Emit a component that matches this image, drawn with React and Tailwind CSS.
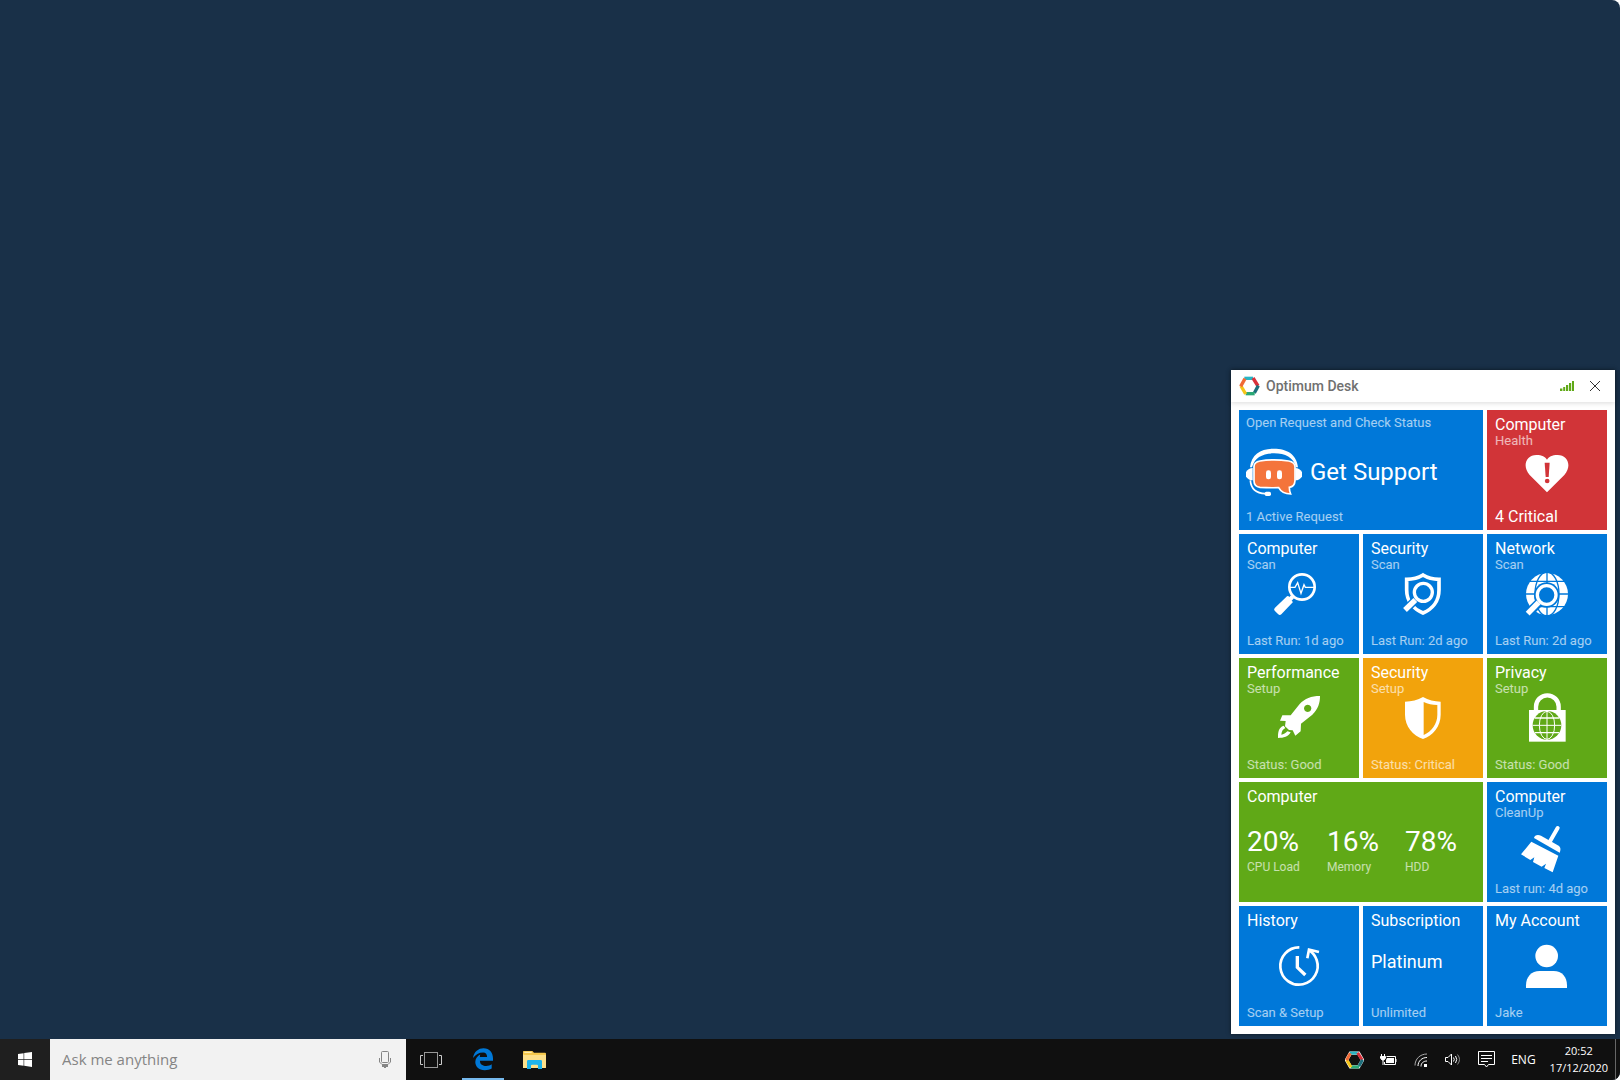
import React from 'react';

const TILE_COLORS = {
  blue: 'bg-[#0078d9]',
  red: 'bg-[#d13438]',
  green: 'bg-[#60a917]',
  orange: 'bg-[#f2a30c]',
};

const Icon = ({ children }) => (
  <svg viewBox="0 0 144 144" className="w-12 h-12 overflow-visible" fill="#fff" aria-hidden="true">
    {children}
  </svg>
);

const HeartIcon = () => (
  <Icon>
    <path d="M72 139 L20 87 C-4 60 10 27 40 27 C57 27 67 33 72 41 C77 33 87 27 104 27 C134 27 148 60 124 87 Z" />
    <path d="M65 50 H80 L77 93 H68 Z" fill="#d13438" />
    <circle cx="72.5" cy="105" r="7" fill="#d13438" />
  </Icon>
);

const PulseScanIcon = () => (
  <Icon>
    <circle cx="81" cy="51" r="38" fill="none" stroke="#fff" strokeWidth="8" />
    <path d="M44 52 H60 L68 38 L78 70 L87 44 L91 52 H119" fill="none" stroke="#fff" strokeWidth="4" />
    <path d="M48 76 L57 85 L50 92 L54 96 L19 133 Q14 137 9 132 L-1 122 Q-5 117 0 113 L36 79 Q40 77 43 81 Z" />
  </Icon>
);

const ShieldScanIcon = () => (
  <Icon>
    <path
      d="M72 15 C56 25 40 28 23 28 V60 C23 95 45 118 72 129 C99 118 120 95 120 60 V28 C104 28 88 25 72 15 Z"
      fill="none"
      stroke="#fff"
      strokeWidth="11"
    />
    <path d="M50 89 L14 125" stroke="#0078d9" strokeWidth="25" />
    <circle cx="73" cy="67" r="35" fill="#0078d9" />
    <circle cx="73" cy="67" r="27" fill="none" stroke="#fff" strokeWidth="10" />
    <path d="M49 90 L18 120" stroke="#fff" strokeWidth="16" />
  </Icon>
);

const GlobeScanIcon = () => (
  <Icon>
    <circle cx="72" cy="72" r="63" />
    <g fill="none" stroke="#0078d9" strokeWidth="4">
      <path d="M72 5 V139 M5 72 H139 M12 34 H132 M12 110 H132" />
      <ellipse cx="72" cy="72" rx="36" ry="66" />
    </g>
    <path d="M48 98 L8 138" stroke="#0078d9" strokeWidth="27" />
    <circle cx="71" cy="75" r="38" fill="#0078d9" />
    <circle cx="71" cy="75" r="28" fill="none" stroke="#fff" strokeWidth="10" />
    <path d="M47 97 L14 131" stroke="#fff" strokeWidth="16" />
  </Icon>
);

const RocketIcon = () => (
  <Icon>
    <path
      fillRule="evenodd"
      d="M135 6 C108 6 90 14 74 30 L47 64 L22 64 L15 80 L32 81 L30 97 L42 108 L53 109 L61 125 L77 112 L78 89 L112 62 C130 45 135 26 135 6 Z M98 32 a11 11 0 1 0 0.1 0 Z"
    />
    <path d="M26 95 C10 101 9 115 9 132 C26 132 40 128 47 115 L37 112 C32 118 26 121 19 122 C20 112 23 106 31 102 Z" />
  </Icon>
);

const ShieldIcon = () => (
  <Icon>
    <path
      fillRule="evenodd"
      d="M72 9 C56 19 38 22 18 23 V62 C18 98 42 124 72 135 C102 124 125 98 125 62 V23 C106 22 88 19 72 9 Z M74 24 C86 30 100 33 115 33 V62 C115 90 98 112 74 123 Z"
    />
  </Icon>
);

const LockGlobeIcon = () => (
  <Icon>
    <path d="M39 50 V38 a34 34 0 0 1 68 0 V50" fill="none" stroke="#fff" strokeWidth="13" />
    <rect x="18" y="48" width="110" height="95" />
    <circle cx="72" cy="94" r="43" fill="#60a917" />
    <g fill="none" stroke="#fff" strokeWidth="3">
      <path d="M72 51 V137 M29 94 H115" />
      <path d="M36 72 H108 M36 116 H108" strokeWidth="4" />
      <ellipse cx="72" cy="94" rx="23" ry="42" />
    </g>
  </Icon>
);

const BroomIcon = () => (
  <Icon>
    <path d="M104 30 L82 68" stroke="#fff" strokeWidth="12" strokeLinecap="round" />
    <path d="M33 60 C34 50 46 49 54 53 L107 83 C114 88 113 96 110 104 Z" />
    <path d="M25 71 L106 113 L89 163 L64 150 L69 137 L56 146 L30 132 L34 118 L22 126 L-6 109 Z" />
  </Icon>
);

const HistoryIcon = () => (
  <Icon>
    <g fill="none" stroke="#fff" strokeWidth="8">
      <path d="M73 16 A56 56 0 1 0 125 54 C121 42 114 32 103 25" />
      <path d="M97 49 L102 23 L132 30" />
      <path d="M67 42 V76 L91 99" strokeWidth="10" />
    </g>
  </Icon>
);

const UserIcon = () => (
  <Icon>
    <circle cx="71" cy="42" r="34" />
    <path d="M9 138 V130 C9 105 25 87 50 87 H92 C117 87 132 105 132 130 V138 Z" />
  </Icon>
);

const SupportBot = () => (
  <svg viewBox="0 0 168 144" className="w-14 h-12 overflow-visible" aria-hidden="true">
    <path d="M12 58 C16 18 46 2 84 2 C122 2 152 18 156 58 L150 58 C142 28 118 16 84 16 C50 16 26 28 18 58 Z" fill="#fff" />
    <path d="M20 60 Q8 60 0 72 V86 Q8 97 20 97 Z" fill="#fff" />
    <path d="M148 60 Q160 60 168 72 V86 Q160 97 148 97 Z" fill="#fff" />
    <path
      d="M42 39 C66 35 102 35 128 39 Q146 42 147 56 V98 Q146 116 130 118 C130 126 131 131 134 138 C116 138 104 130 98 119 C76 120 58 119 42 118 Q24 115 24 98 V56 Q24 42 42 39 Z"
      fill="#f4743b"
      stroke="#fff"
      strokeWidth="5"
    />
    <path d="M13 97 C15 122 32 136 58 137" fill="none" stroke="#fff" strokeWidth="5" />
    <rect x="56" y="131" width="19" height="13" rx="5" fill="#fff" />
    <rect x="60" y="67" width="15" height="27" rx="7" fill="#fff" />
    <rect x="93" y="67" width="15" height="27" rx="7" fill="#fff" />
  </svg>
);

const HexLogo = ({ className }) => (
  <svg viewBox="0 0 63 58" className={className} fill="none" strokeWidth="10" aria-hidden="true">
    <path d="M18 6 L5 29 L18 52 H45 L58 29 L45 6 Z" stroke="#fff" strokeWidth="11" />
    <path d="M16 6 H42" stroke="#28b5c4" />
    <path d="M42 5 L57 29" stroke="#d9303a" />
    <path d="M58 28 L46 50" stroke="#1d6f7c" />
    <path d="M20 52 H47" stroke="#2aa876" />
    <path d="M6 29 L20 53" stroke="#f5c518" />
    <path d="M18 7 L5 30" stroke="#f06a35" />
  </svg>
);

const Tile = ({ title, subtitle, footer, footerClass = 'text-[13px] text-white/65', color, icon, children }) => (
  <button type="button" className={`grid h-[120px] text-left text-white ${TILE_COLORS[color]}`}>
    <span className="col-start-1 row-start-1 flex h-full flex-col px-2 pt-1.5 pb-[5px]">
      <span className="text-base leading-[18px]">{title}</span>
      {subtitle && <span className="text-[13px] leading-[14px] text-white/65">{subtitle}</span>}
      {children}
      <span className={`mt-auto leading-4 ${footerClass}`}>{footer}</span>
    </span>
    {icon && <span className="col-start-1 row-start-1 place-self-center">{icon}</span>}
  </button>
);

const STATS = [
  { label: 'CPU Load', value: '20%' },
  { label: 'Memory', value: '16%' },
  { label: 'HDD', value: '78%' },
];

const OptimumDesk = () => (
  <section className="w-96 bg-white shadow-[0_0_4px_rgba(0,0,0,0.5)] font-['Roboto',sans-serif]">
    <header className="flex h-8 items-center pl-2 pr-[15px] shadow-[0_1px_5px_rgba(0,0,0,0.15)]">
      <HexLogo className="w-[21px] h-5" />
      <h1 className="ml-1.5 text-sm font-medium text-[#707070]">Optimum Desk</h1>
      <svg viewBox="0 0 14 10" className="ml-auto w-3.5 h-2.5" fill="#60a917" aria-hidden="true">
        <path d="M0 7.5h2.4V10H0z M3.2 6h2v4h-2z M6 4h2.2v6H6z M9 2h2.2v8H9z M12 0h2v10h-2z" />
      </svg>
      <button type="button" aria-label="Close" className="ml-4">
        <svg viewBox="0 0 10 10" className="w-2.5 h-2.5 overflow-visible" stroke="#333" fill="none">
          <path d="M0 0 L10 10 M10 0 L0 10" />
        </svg>
      </button>
    </header>

    <div className="grid grid-cols-3 gap-1 p-2">
      <button type="button" className="col-span-2 flex h-[120px] flex-col bg-[#0078d9] px-[7px] pt-1.5 pb-[5px] text-left text-white">
        <span className="text-[13px] leading-[14px] text-white/65">Open Request and Check Status</span>
        <span className="flex flex-1 items-center gap-2 pt-1 text-2xl">
          <SupportBot />
          Get Support
        </span>
        <span className="text-[13px] leading-4 text-white/65">1 Active Request</span>
      </button>
      <Tile title="Computer" subtitle="Health" footer="4 Critical" footerClass="text-base" color="red" icon={<HeartIcon />} />

      <Tile title="Computer" subtitle="Scan" footer="Last Run: 1d ago" color="blue" icon={<PulseScanIcon />} />
      <Tile title="Security" subtitle="Scan" footer="Last Run: 2d ago" color="blue" icon={<ShieldScanIcon />} />
      <Tile title="Network" subtitle="Scan" footer="Last Run: 2d ago" color="blue" icon={<GlobeScanIcon />} />

      <Tile title="Performance" subtitle="Setup" footer="Status: Good" color="green" icon={<RocketIcon />} />
      <Tile title="Security" subtitle="Setup" footer="Status: Critical" color="orange" icon={<ShieldIcon />} />
      <Tile title="Privacy" subtitle="Setup" footer="Status: Good" color="green" icon={<LockGlobeIcon />} />

      <div className="col-span-2 h-[120px] bg-[#60a917] px-2 pt-1.5 text-white">
        <h2 className="text-base leading-[18px]">Computer</h2>
        <dl className="mt-5 grid grid-cols-[80px_78px_auto]">
          {STATS.map(stat => (
            <div key={stat.label} className="flex flex-col-reverse">
              <dt className="text-xs leading-[18px] text-white/65">{stat.label}</dt>
              <dd className="text-[28px] leading-8">{stat.value}</dd>
            </div>
          ))}
        </dl>
      </div>
      <Tile title="Computer" subtitle="CleanUp" footer="Last run: 4d ago" color="blue" icon={<BroomIcon />} />

      <Tile title="History" footer="Scan & Setup" color="blue" icon={<HistoryIcon />} />
      <Tile title="Subscription" footer="Unlimited" color="blue">
        <span className="mt-5 text-lg leading-6">Platinum</span>
      </Tile>
      <Tile title="My Account" footer="Jake" color="blue" icon={<UserIcon />} />
    </div>
  </section>
);

const TrayButton = ({ label, children }) => (
  <button type="button" aria-label={label} className="flex items-center justify-center">
    {children}
  </button>
);

const Taskbar = () => (
  <footer className="flex h-[41px] items-stretch bg-[#101010] text-white font-['Open_Sans',sans-serif]">
    <button type="button" aria-label="Start" className="flex w-[50px] items-center justify-center bg-[#1f1f1f]">
      <svg viewBox="0 0 14 15" className="w-3.5 h-[15px]" fill="#fff">
        <path d="M0 2 L5.6 1.2 V7.1 H0 Z M6.2 1.1 L14 0 V7.1 H6.2 Z M0 7.7 H5.6 V13.7 L0 13 Z M6.2 7.7 H14 V15 L6.2 13.8 Z" />
      </svg>
    </button>
    <label className="flex w-[356px] items-center bg-[#f2f2f2] pl-3 pr-[15px]">
      <input
        type="text"
        aria-label="Search"
        placeholder="Ask me anything"
        className="min-w-0 flex-1 bg-transparent text-[15px] text-black outline-none placeholder:text-[#858585]"
      />
      <svg viewBox="0 0 12 17" className="w-3 h-[17px]" fill="none" stroke="#858585" aria-hidden="true">
        <rect x="2.5" y="0.5" width="7" height="11" rx="1" />
        <path d="M0.5 7 V11 L3 13.5 H9 L11.5 11 V7" />
        <path d="M3 15 H9 M5 16.5 H7" strokeWidth="2" />
      </svg>
    </label>
    <button type="button" aria-label="Task view" className="flex w-[50px] items-center justify-center">
      <svg viewBox="0 0 22 16" className="w-[22px] h-4" fill="none" stroke="#ccc">
        <rect x="4.5" y="0.5" width="13" height="15" stroke="#999" />
        <path d="M3 3.5 H0.5 V12.5 H3 M19 3.5 H21.5 V12.5 H19" />
      </svg>
    </button>
    <button type="button" aria-label="Microsoft Edge" className="flex w-[54px] items-center justify-center px-1.5">
      <span className="flex h-full flex-1 items-center justify-center border-b-2 border-[#76b9ed]">
        <svg viewBox="0 0 61 66" className="w-5 h-[22px] overflow-visible" fill="#0078d7">
          <path d="M0 30 C3 10 17 0 32 0 C51 0 61 14 61 31 V38 H21 C21 50 31 54 40 54 C47 54 53 52 57 49 V62 C51 65 44 67 36 67 C17 67 7 55 7 42 C7 31 14 24 22 19 C21 22 21 25 21 27 H43 C43 19 39 13 31 13 C18 13 8 19 0 30 Z" />
        </svg>
      </span>
    </button>
    <button type="button" aria-label="File Explorer" className="flex w-12 items-center justify-center">
      <svg viewBox="0 0 69 54" className="w-[23px] h-[18px]">
        <path d="M2 0 H28 L33 5 H66 Q69 5 69 8 V51 H2 Q0 51 0 49 V2 Q0 0 2 0 Z" fill="#f5c84c" />
        <path d="M4 12 H69 V48 Q69 51 66 51 H0 V10 Z" fill="#fde08a" />
        <path d="M4 4 H26" stroke="#fff3c4" strokeWidth="3" />
        <path d="M12 54 V31 Q12 27 16 27 H53 Q57 27 57 31 V54 H45 V44 Q45 41 42 41 H27 Q24 41 24 44 V54 Z" fill="#1eb4ec" />
      </svg>
    </button>

    <div className="ml-auto flex items-stretch">
      <div className="flex items-stretch gap-4 pr-[14px]">
        <TrayButton label="Optimum Desk">
          <HexLogo className="w-[19px] h-[18px]" />
        </TrayButton>
        <TrayButton label="Battery">
          <svg viewBox="0 0 17 12" className="w-[17px] h-3" fill="none" stroke="#fff">
            <path d="M6.5 2.5 H15.5 V10.5 H4.5 V8" />
            <path d="M7 4 H14 V9 H6 V6 Z" fill="#fff" stroke="none" />
            <path d="M16 5 V8 M1.5 0 V2 M4.5 0 V2 M3 6 V11" />
            <path d="M0.5 2.5 H5.5 V4 L4 6 H2 L0.5 4 Z" fill="#fff" />
          </svg>
        </TrayButton>
        <TrayButton label="Network">
          <svg viewBox="0 0 16 14" className="w-4 h-3.5 overflow-visible" fill="none" stroke="#fff">
            <path d="M2 12.5 C2 6 7 1 14 1" stroke="#aaa" />
            <path d="M5 13 C5 8 9 4.5 14 4.5" />
            <path d="M8 13.5 C8 10 10.5 8 14 8" />
            <path d="M11 11 H14 V14 H11 Z" fill="#fff" stroke="none" />
          </svg>
        </TrayButton>
        <TrayButton label="Volume">
          <svg viewBox="0 0 17 13" className="w-[17px] h-[13px]" fill="none" stroke="#fff">
            <path d="M0.5 4.5 H3 L6.5 1 V12 L3 8.5 H0.5 Z" />
            <path d="M8.5 4.5 Q10 6.5 8.5 8.5 M10.5 3 Q13 6.5 10.5 10" />
            <path d="M12.5 1.5 Q16.5 6.5 12.5 11.5" stroke="#888" />
          </svg>
        </TrayButton>
        <TrayButton label="Notifications">
          <svg viewBox="0 0 17 17" className="w-[17px] h-[17px]" fill="none" stroke="#fff">
            <path d="M0.5 0.5 H16.5 V13.5 H10.5 L8.5 16 L6.5 13.5 H0.5 Z" />
            <path d="M3 4.5 H14 M3 7.5 H14 M3 10.5 H10" />
          </svg>
        </TrayButton>
        <button type="button" className="text-xs">ENG</button>
      </div>
      <div className="flex items-center pr-[7px] pb-0.5">
        <time dateTime="2020-12-17T20:52" className="flex flex-col items-center text-[11px] leading-[17px]">
          <span>20:52</span>
          <span>17/12/2020</span>
        </time>
      </div>
      <button type="button" aria-label="Show desktop" className="w-[5px] border-l border-[#666]" />
    </div>
  </footer>
);

const App = () => {
  return (
    <div className="bg-white">
      <div className="flex h-screen flex-col overflow-hidden rounded-r-lg bg-[#193048]">
        <main className="flex flex-1 items-end justify-end p-[5px]">
          <OptimumDesk />
        </main>
        <Taskbar />
      </div>
    </div>
  );
};

export default App;
